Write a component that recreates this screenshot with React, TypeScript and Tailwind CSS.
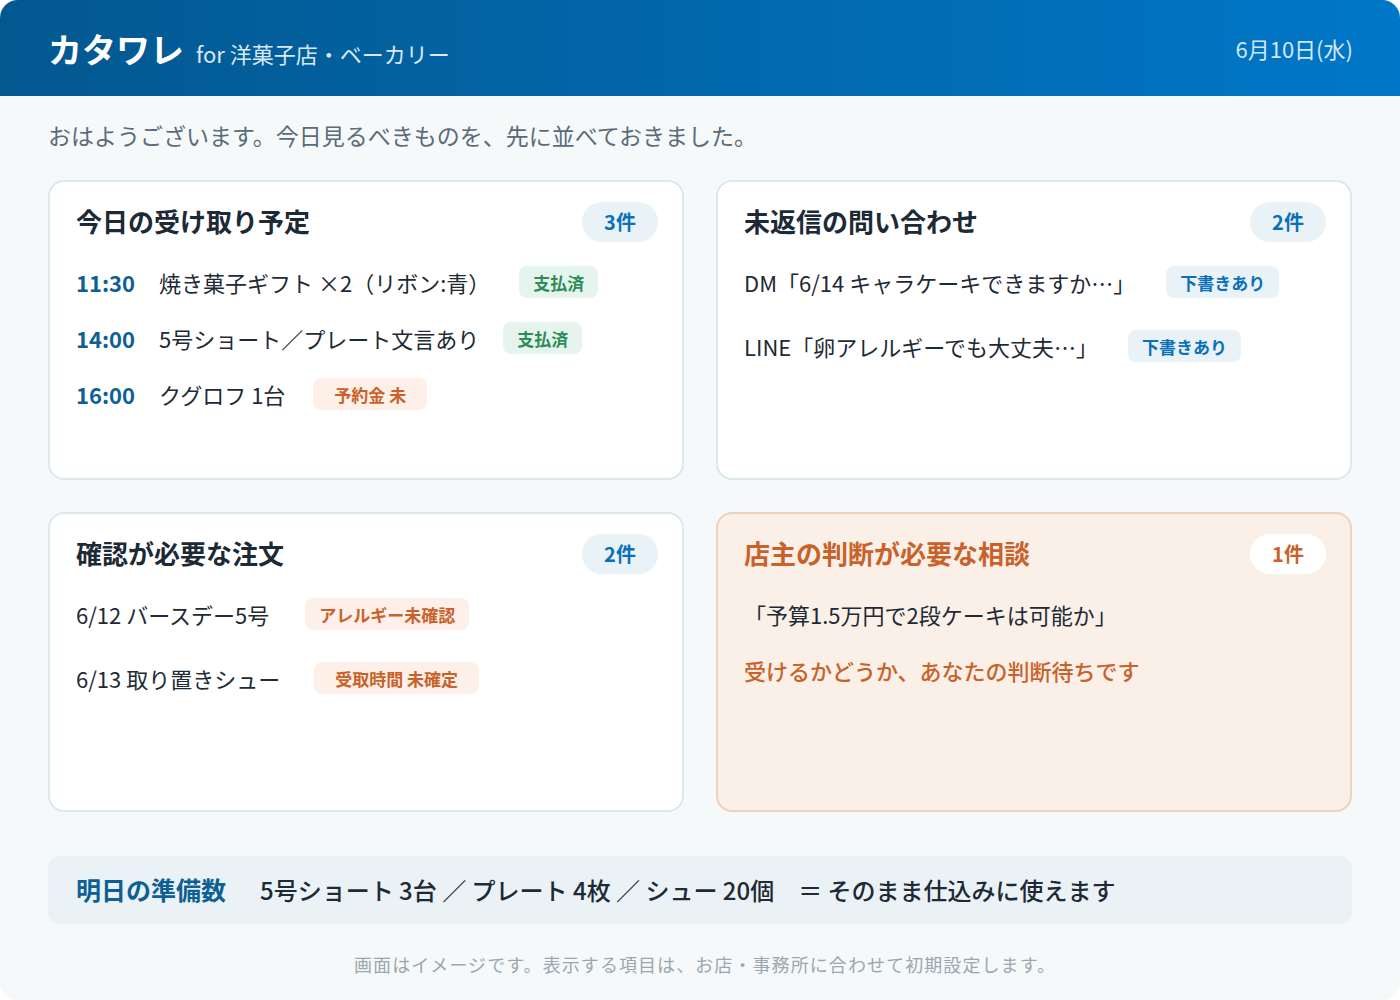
import React from "react";

type Tone = "green" | "orange" | "blue";

const tagTone: Record<Tone, string> = {
  green: "bg-[#e5f4ec] text-[#2e8c59]",
  orange: "bg-[#fdf0e9] text-[#c9622a]",
  blue: "bg-[#e8f2f7] text-[#0b70b8]",
};

function Tag({
  tone,
  wide,
  children,
}: {
  tone: Tone;
  wide?: boolean;
  children: React.ReactNode;
}) {
  return (
    <span
      className={`inline-flex h-8 items-center rounded-lg text-[17px] font-bold leading-none ${
        wide ? "px-[21px]" : "px-[14px]"
      } ${tagTone[tone]}`}
    >
      {children}
    </span>
  );
}

function Card({
  title,
  count,
  warm,
  rowGap,
  children,
}: {
  title: string;
  count: string;
  warm?: boolean;
  rowGap: string;
  children: React.ReactNode;
}) {
  return (
    <section
      className={`h-[300px] rounded-2xl border-2 pl-[26px] pr-6 pt-5 ${
        warm ? "border-[#ecd3bf] bg-[#faf0e8]" : "border-[#dce8ee] bg-white"
      }`}
    >
      <div className="flex h-10 items-center justify-between">
        <h2
          className={`-mt-[3px] text-[26px] font-bold leading-none ${
            warm ? "text-[#c9622a]" : "text-[#1c2a36]"
          }`}
        >
          {title}
        </h2>
        <span
          className={`flex h-10 w-[76px] items-center justify-center rounded-full text-[20px] font-bold ${
            warm ? "bg-white text-[#c9622a]" : "bg-[#e9f2f7] text-[#0b70b8]"
          }`}
        >
          {count}
        </span>
      </div>
      <div className={`mt-6 flex flex-col ${rowGap}`}>{children}</div>
    </section>
  );
}

function Row({ gap = "gap-6", children }: { gap?: string; children: React.ReactNode }) {
  return (
    <div className={`flex h-8 items-center text-[22px] leading-none text-[#1e2a35] ${gap}`}>
      {children}
    </div>
  );
}

function Time({ children }: { children: React.ReactNode }) {
  return <span className="font-bold text-[#0e5f94]">{children}</span>;
}

export default function App() {
  return (
    <div
      className="h-[1000px] w-[1400px] bg-white"
      style={{ fontFamily: '"Noto Sans CJK JP", "Noto Sans", sans-serif' }}
    >
      <div className="flex h-full flex-col overflow-hidden rounded-[18px] bg-[#f5f9fa]">
        <header className="flex h-24 shrink-0 items-center justify-between bg-linear-to-r from-[#035890] to-[#0077c8] pl-12 pr-[47px]">
          <div className="flex items-baseline gap-3">
            <span className="text-[34px] font-bold text-white">カタワレ</span>
            <span className="text-[22px] text-[#d8e9f5]">for 洋菓子店・ベーカリー</span>
          </div>
          <span className="text-[22px] text-[#d3e6f3]">6月10日(水)</span>
        </header>

        <main className="flex flex-1 flex-col px-12">
          <p className="mt-[23px] text-[23px] leading-8 text-[#5b6b78]">
            おはようございます。今日見るべきものを、先に並べておきました。
          </p>

          <div className="mt-[29px] grid grid-cols-2 gap-8">
            <Card title="今日の受け取り予定" count="3件" rowGap="gap-6">
              <Row>
                <Time>11:30</Time>
                <span className="mr-[5px]">焼き菓子ギフト ×2（リボン:青）</span>
                <Tag tone="green">支払済</Tag>
              </Row>
              <Row>
                <Time>14:00</Time>
                <span>5号ショート／プレート文言あり</span>
                <Tag tone="green">支払済</Tag>
              </Row>
              <Row>
                <Time>16:00</Time>
                <span className="mr-1">クグロフ 1台</span>
                <Tag tone="orange" wide>
                  予約金 未
                </Tag>
              </Row>
            </Card>

            <Card title="未返信の問い合わせ" count="2件" rowGap="gap-8">
              <Row gap="gap-[31px]">
                <span>DM「6/14 キャラケーキできますか…」</span>
                <Tag tone="blue">下書きあり</Tag>
              </Row>
              <Row gap="gap-[30px]">
                <span>LINE「卵アレルギーでも大丈夫…」</span>
                <Tag tone="blue">下書きあり</Tag>
              </Row>
            </Card>

            <Card title="確認が必要な注文" count="2件" rowGap="gap-8">
              <Row gap="gap-[36px]">
                <span>6/12 バースデー5号</span>
                <Tag tone="orange">アレルギー未確認</Tag>
              </Row>
              <Row gap="gap-[34px]">
                <span>6/13 取り置きシュー</span>
                <Tag tone="orange" wide>
                  受取時間 未確定
                </Tag>
              </Row>
            </Card>

            <Card title="店主の判断が必要な相談" count="1件" warm rowGap="gap-6">
              <Row>
                <span>「予算1.5万円で2段ケーキは可能か」</span>
              </Row>
              <Row>
                <span className="font-medium text-[#c9622a]">
                  受けるかどうか、あなたの判断待ちです
                </span>
              </Row>
            </Card>
          </div>

          <div className="mt-11 flex h-[68px] items-center gap-[34px] rounded-xl bg-[#eaf2f5] px-7">
            <span className="text-[25px] font-bold text-[#0e5f94]">明日の準備数</span>
            <span className="text-[24px] font-medium text-[#1e2a35]">
              5号ショート 3台 ／ プレート 4枚 ／ シュー 20個　＝ そのまま仕込みに使えます
            </span>
          </div>

          <p className="mt-[27px] pl-[10px] text-center text-[18px] tracking-[0.06em] text-[#9ba7af]">
            画面はイメージです。表示する項目は、お店・事務所に合わせて初期設定します。
          </p>
        </main>
      </div>
    </div>
  );
}
